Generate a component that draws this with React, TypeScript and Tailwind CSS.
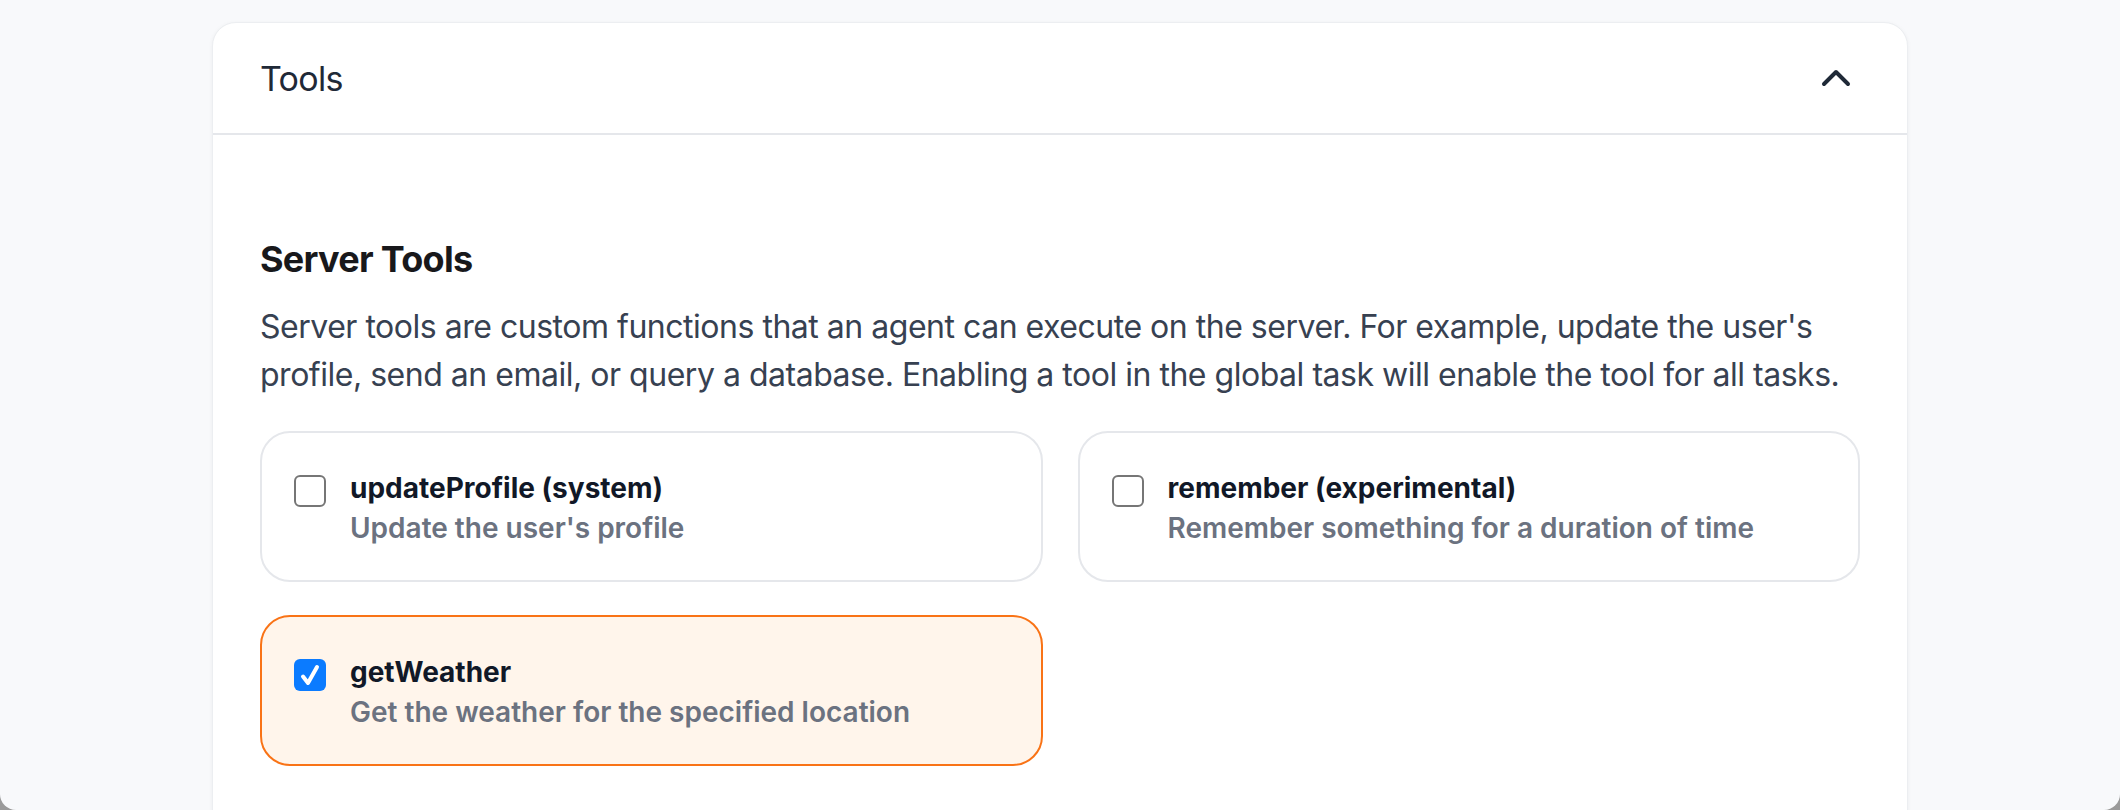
import React from "react";
import { ChevronUp } from "lucide-react";

type Tool = { name: string; desc: string; checked?: boolean };

const tools: Tool[] = [
  { name: "updateProfile (system)", desc: "Update the user's profile" },
  { name: "remember (experimental)", desc: "Remember something for a duration of time" },
  { name: "getWeather", desc: "Get the weather for the specified location", checked: true },
];

function Checkbox({ checked }: { checked?: boolean }) {
  if (checked) {
    return (
      <div className="mt-[7px] flex h-[32px] w-[32px] shrink-0 items-center justify-center rounded-[6px] bg-[#0b7bff]">
        <svg width="22" height="24" viewBox="0 0 22 24" fill="none">
          <path
            d="M4 13.5 L9 20 L18 4"
            stroke="white"
            strokeWidth="4"
            strokeLinecap="round"
            strokeLinejoin="round"
          />
        </svg>
      </div>
    );
  }
  return (
    <div className="mt-[7px] h-[32px] w-[32px] shrink-0 rounded-[6px] border-2 border-[#767676] bg-white" />
  );
}

function ToolCard({ tool }: { tool: Tool }) {
  return (
    <div
      className={
        tool.checked
          ? "flex gap-[24px] rounded-[30px] border-2 border-[#f97316] bg-[#fff5eb] px-[32px] pt-[35px] pb-[32px]"
          : "flex gap-[24px] rounded-[30px] border-2 border-[#e5e7eb] bg-white px-[32px] pt-[35px] pb-[32px]"
      }
    >
      <Checkbox checked={tool.checked} />
      <div className="flex flex-col">
        <div className="text-[28px] font-bold leading-[40px] text-[#111827]">{tool.name}</div>
        <div className="text-[28px] font-semibold leading-[40px] text-[#6b7280]">{tool.desc}</div>
      </div>
    </div>
  );
}

export default function App() {
  return (
    <div className="h-[810px] w-[2120px] overflow-hidden bg-[#9a9a9a]" style={{ fontFamily: "Inter, sans-serif" }}>
      <div className="h-[810px] w-[2120px] overflow-hidden rounded-b-[16px] bg-[#f8f9fb] pt-[22px]">
        <div className="mx-auto w-[1696px] rounded-t-[24px] border border-[#eceef1] bg-white shadow-[0_1px_4px_rgba(0,0,0,0.05)]">
          <div className="flex h-[112px] items-center justify-between border-b-2 border-[#e5e7eb] px-[47px]">
            <div className="text-[34px] tracking-[-0.02em] text-[#1f2937]">Tools</div>
            <ChevronUp size={48} strokeWidth={2} color="#1f2937" />
          </div>
          <div className="px-[47px] pt-[96px] pb-[64px]">
            <h2 className="text-[36px] font-bold leading-[56px] tracking-[-0.02em] text-[#18181b]">Server Tools</h2>
            <p className="mt-[16px] text-[32px] leading-[48px] tracking-[-0.015em] text-[#374151]">
              Server tools are custom functions that an agent can execute on the server. For example, update the user's
              profile, send an email, or query a database. Enabling a tool in the global task will enable the tool for
              all tasks.
            </p>
            <div className="mt-[32px] grid grid-cols-2 gap-x-[35px] gap-y-[33px]">
              {tools.map((t) => (
                <ToolCard key={t.name} tool={t} />
              ))}
            </div>
          </div>
        </div>
      </div>
    </div>
  );
}
